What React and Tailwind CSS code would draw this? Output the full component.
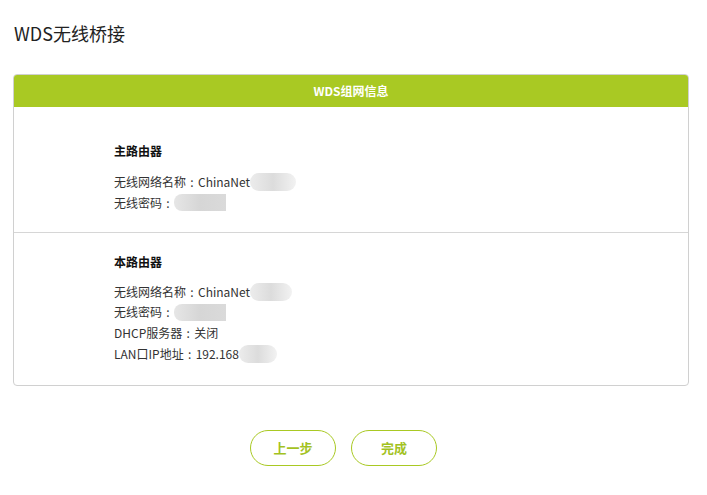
export default function App() {
  const font = { fontFamily: '"Noto Sans CJK SC", "Noto Sans", sans-serif' };
  const Blob = ({ w }) => (
    <span
      className="inline-block h-[18px] align-middle rounded-full bg-gradient-to-r from-[#ececec] via-[#dcdcdc] to-[#f2f2f2]"
      style={{ width: w }}
    />
  );
  const Pwd = () => (
    <span className="inline-block h-[17px] w-[52px] align-middle rounded-l-[8px] bg-gradient-to-r from-[#e6e6e6] via-[#d6d6d6] to-[#dadada]" />
  );
  const C = () => <span className="inline-block w-[12px] text-center">:</span>;
  return (
    <div className="w-[707px] h-[495px] bg-white text-[#333] overflow-hidden" style={font}>
      <div className="pt-[19px] pl-[14px] text-[18px] leading-[28px] text-[#222]">WDS无线桥接</div>
      <div className="mt-[27px] mx-[13px] w-[676px] border border-[#d0d0d0] rounded-[4px] overflow-hidden">
        <div className="h-[32px] bg-[#a9c923] flex items-center justify-center text-white text-[12px] font-bold">
          WDS组网信息
        </div>
        <div className="pl-[100px] pt-[33px] pb-[19px] text-[12px] leading-[21px]">
          <div className="font-bold text-[#111] mb-[10px]">主路由器</div>
          <div className="flex items-center">无线网络名称<C />ChinaNet<Blob w={46} /></div>
          <div className="flex items-center">无线密码<C /><Pwd /></div>
        </div>
        <div className="border-t border-[#d6d6d6] pl-[100px] pt-[19px] pb-[20px] text-[12px] leading-[20.7px]">
          <div className="font-bold text-[#111] mb-[9px]">本路由器</div>
          <div className="flex items-center">无线网络名称<C />ChinaNet<Blob w={42} /></div>
          <div className="flex items-center">无线密码<C /><Pwd /></div>
          <div className="flex items-center">DHCP服务器<C />关闭</div>
          <div className="flex items-center">LAN口IP地址<C />192.168<Blob w={38} /></div>
        </div>
      </div>
      <div className="mt-[44px] flex gap-[15px] pl-[250px]">
        <button className="w-[86px] h-[36px] rounded-full border border-[#a9c923] text-[#a3c21f] text-[13px] font-bold bg-white">
          上一步
        </button>
        <button className="w-[86px] h-[36px] rounded-full border border-[#a9c923] text-[#a3c21f] text-[13px] font-bold bg-white">
          完成
        </button>
      </div>
    </div>
  );
}
